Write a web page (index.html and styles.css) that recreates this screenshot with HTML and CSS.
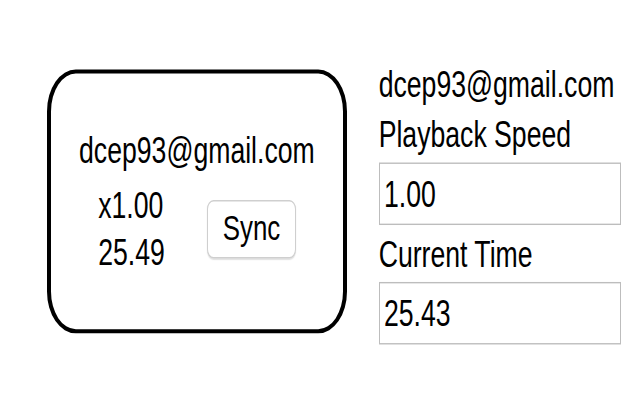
FILE: index.html
```html
<!DOCTYPE html>
<html>
<head>
<meta charset="utf-8">
<link rel="stylesheet" href="styles.css">
</head>
<body>
<div class="stage">
  <div class="card">
    <div class="card-email">dcep93@gmail.com</div>
    <div class="card-row">
      <div class="stats">
        <div class="stat">x1.00</div>
        <div class="stat">25.49</div>
      </div>
      <button class="sync">Sync</button>
    </div>
  </div>
  <div class="panel">
    <div class="label">dcep93@gmail.com</div>
    <div class="label">Playback Speed</div>
    <input class="field" type="text" value="1.00">
    <div class="label">Current Time</div>
    <input class="field" type="text" value="25.43">
  </div>
</div>
</body>
</html>
```
FILE: styles.css
```css
html, body {
  margin: 0;
  padding: 0;
  width: 640px;
  height: 400px;
  background: #fff;
  overflow: hidden;
}

.stage {
  width: 640px;
  height: 288px;
  box-sizing: border-box;
  padding: 43.2px 0 0 46.8px;
  display: flex;
  align-items: flex-start;
  gap: 31.7px;
  transform: scaleY(1.389);
  transform-origin: 0 0;
  font-family: "Liberation Sans", Arial, sans-serif;
  font-size: 26.64px;
  color: #000;
}

.card {
  margin-top: 7.2px;
  width: 300.2px;
  height: 189.3px;
  box-sizing: border-box;
  border-style: solid;
  border-color: #000;
  border-width: 3.6px 4.3px;
  border-radius: 28.8px / 30.2px;
  display: flex;
  flex-direction: column;
  justify-content: center;
  align-items: center;
}

.card-email {
  line-height: 36px;
}

.card-row {
  margin-top: 4.3px;
  display: flex;
  align-items: center;
  gap: 42.5px;
}

.stats {
  display: flex;
  flex-direction: column;
}

.stat {
  line-height: 34.56px;
}

.sync {
  font-family: inherit;
  font-size: 25.9px;
  color: #000;
  background: #fff;
  height: 41.8px;
  padding: 0 14.4px;
  border: 1px solid #cfcfcf;
  border-radius: 6.5px;
  box-shadow: 0 1px 1px rgba(0, 0, 0, 0.12);
  line-height: 1;
}

.panel {
  width: 242.6px;
  display: flex;
  flex-direction: column;
}

.label {
  line-height: 36px;
  white-space: nowrap;
}

.field {
  margin: 2.16px 0 2.88px;
  width: 242.6px;
  height: 44.6px;
  box-sizing: border-box;
  padding: 2.16px 4.3px 0;
  border: 1px solid #bdbdbd;
  border-radius: 0;
  font-family: inherit;
  font-size: 26.64px;
  color: #000;
  background: #fff;
  outline: none;
}
```
